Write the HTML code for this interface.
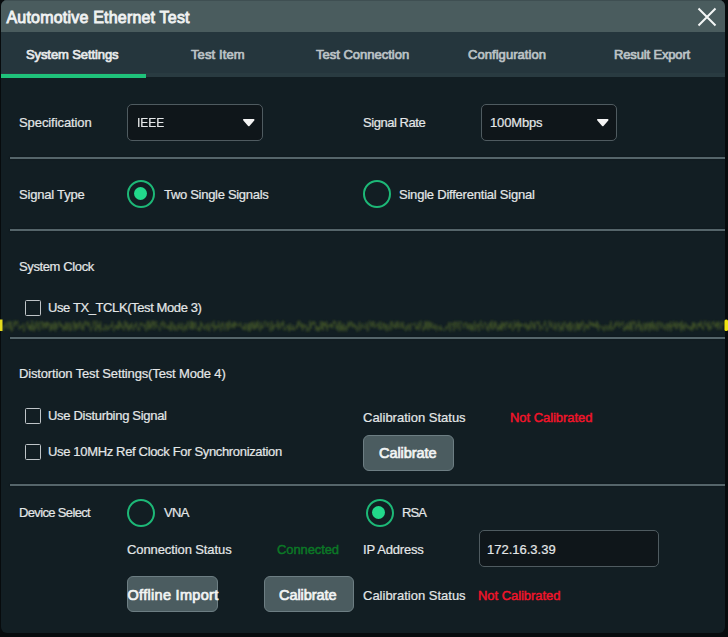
<!DOCTYPE html>
<html><head><meta charset="utf-8">
<style>
*{margin:0;padding:0;box-sizing:border-box}
html,body{width:728px;height:637px;overflow:hidden;background:#070b0d}
body{position:relative;font-family:"Liberation Sans",sans-serif;color:#e4e7e8}
.dlg{position:absolute;left:1px;top:0;width:724px;height:633px;background:#121e23;border-radius:6px;overflow:hidden}
.title{position:absolute;left:0;top:0;width:724px;height:32px;background:#4a5c5e;border-top:1px solid #3f4f52}
.tabs{position:absolute;left:0;top:32px;width:724px;height:45px;background:#25363d}
.t{position:absolute;white-space:nowrap;font-size:13px;line-height:16px;-webkit-text-stroke:0.2px currentColor}
.b{font-weight:bold}
.m{-webkit-text-stroke:0.7px currentColor}
.sep{position:absolute;left:10px;width:715px;height:2px;background:#55656a;box-shadow:0 0 1.5px #0b1316}
.dd{position:absolute;border:1.7px solid #4f5b60;border-radius:5px;background:#0f161a}
.tri{position:absolute;width:0;height:0;border-left:6px solid transparent;border-right:6px solid transparent;border-top:7px solid #f2f2f2}
.radio{position:absolute;width:28px;height:28px;border:2.6px solid #1db877;border-radius:50%}
.radio.on::after{content:"";position:absolute;left:4.9px;top:4.9px;width:13px;height:13px;border-radius:50%;background:#22d88b}
.cb{position:absolute;width:16px;height:16px;border:1.8px solid #bfc5c8;border-radius:1.5px}
.btn{position:absolute;background:#4b5c60;border:1px solid #6d7e83;border-radius:6px}
.red{color:#f2142a;-webkit-text-stroke:0.45px currentColor}
.grn{color:#0b7826;-webkit-text-stroke:0.45px currentColor}
.wave{position:absolute;left:0;top:317px;width:728px;height:17px;overflow:visible}
</style></head><body>
<div class="dlg">
  <div class="title"></div>
  <div class="tabs"></div>
  <div style="position:absolute;left:0;top:73px;width:724px;height:4px;background:#293b41"></div>
  <div style="position:absolute;left:-1px;top:74px;width:146px;height:3.5px;background:#1fc27b"></div>
</div>
<!-- title -->
<div class="t m" style="left:6.5px;top:7.5px;font-size:16px;line-height:20px;letter-spacing:0.2px;color:#f0f2f2;-webkit-text-stroke:0.85px #f0f2f2">Automotive Ethernet Test</div>
<svg style="position:absolute;left:696px;top:6px" width="22" height="22" viewBox="0 0 22 22"><path d="M2.5 2.5L19.5 19.5M19.5 2.5L2.5 19.5" stroke="#f4f6f6" stroke-width="2"/></svg>
<!-- tabs -->
<div class="t m" style="left:26px;top:47px;font-size:13px;letter-spacing:-0.1px;color:#e8eaeb">System Settings</div>
<div class="t m" style="left:191px;top:47px;font-size:13px;letter-spacing:0.1px;color:#bcc3c6">Test Item</div>
<div class="t m" style="left:316px;top:47px;font-size:13px;letter-spacing:0px;color:#bcc3c6">Test Connection</div>
<div class="t m" style="left:468px;top:47px;font-size:13px;letter-spacing:0.05px;color:#bcc3c6">Configuration</div>
<div class="t m" style="left:614px;top:47px;font-size:13px;letter-spacing:-0.15px;color:#bcc3c6">Result Export</div>

<!-- row 1 -->
<div class="t" style="left:19px;top:115px;letter-spacing:-0.08px">Specification</div>
<div class="dd" style="left:127px;top:104px;width:136px;height:37px"></div>
<div class="t" style="left:137px;top:115px;transform:scaleX(0.92);transform-origin:0 0">IEEE</div>
<svg style="position:absolute;left:242px;top:118px" width="14" height="10" viewBox="0 0 14 10"><path d="M2.0 1.8 L11.6 1.8 L6.8 7.3 Z" fill="#f4f4f4" stroke="#f4f4f4" stroke-width="1.8" stroke-linejoin="round"/></svg>
<div class="t" style="left:363px;top:115px;letter-spacing:-0.45px">Signal Rate</div>
<div class="dd" style="left:481px;top:104px;width:136px;height:37px"></div>
<div class="t" style="left:490px;top:115px;letter-spacing:-0.15px">100Mbps</div>
<svg style="position:absolute;left:595.5px;top:118px" width="14" height="10" viewBox="0 0 14 10"><path d="M2.0 1.8 L11.6 1.8 L6.8 7.3 Z" fill="#f4f4f4" stroke="#f4f4f4" stroke-width="1.8" stroke-linejoin="round"/></svg>
<div class="sep" style="top:157px"></div>

<!-- row 2 -->
<div class="t" style="left:19px;top:187px;letter-spacing:-0.2px">Signal Type</div>
<div class="radio on" style="left:127.2px;top:180.4px"></div>
<div class="t" style="left:164px;top:187px;letter-spacing:-0.3px">Two Single Signals</div>
<div class="radio" style="left:362.5px;top:180.2px"></div>
<div class="t" style="left:399px;top:187px;letter-spacing:-0.22px">Single Differential Signal</div>
<div class="sep" style="top:229px"></div>

<!-- row 3 -->
<div class="t" style="left:19px;top:259px;letter-spacing:-0.38px">System Clock</div>
<div class="cb" style="left:25px;top:300px"></div>
<div class="t" style="left:48px;top:300px;letter-spacing:-0.4px">Use TX_TCLK(Test Mode 3)</div>
<svg class="wave" width="728" height="17" viewBox="0 0 728 17">
  <defs><filter id="bl" x="-5%" y="-50%" width="110%" height="200%"><feGaussianBlur stdDeviation="1"/></filter></defs>
  <path d="M2.0 8.5 L2.6 9.7 L3.2 13.7 L3.8 8.6 L4.4 9.1 L5.0 10.0 L5.6 5.5 L6.2 9.1 L6.8 10.4 L7.4 12.2 L8.0 4.5 L8.6 6.8 L9.2 4.5 L9.8 12.4 L10.4 11.1 L11.0 4.0 L11.6 14.3 L12.2 14.1 L12.8 10.7 L13.4 10.3 L14.0 5.2 L14.6 3.7 L15.2 9.3 L15.8 4.2 L16.4 5.6 L17.0 6.2 L17.6 3.8 L18.2 8.6 L18.8 8.3 L19.4 12.8 L20.0 9.2 L20.6 10.5 L21.2 9.0 L21.8 10.8 L22.4 8.5 L23.0 6.6 L23.6 14.5 L24.2 14.5 L24.8 12.7 L25.4 11.3 L26.0 7.0 L26.6 6.0 L27.2 6.7 L27.8 4.3 L28.4 11.9 L29.0 7.9 L29.6 12.8 L30.2 7.8 L30.8 14.0 L31.4 12.8 L32.0 3.5 L32.6 5.8 L33.2 13.5 L33.8 8.7 L34.4 14.3 L35.0 7.9 L35.6 4.3 L36.2 10.4 L36.8 12.1 L37.4 6.5 L38.0 4.5 L38.6 7.2 L39.2 14.1 L39.8 11.8 L40.4 4.8 L41.0 6.2 L41.6 4.6 L42.2 4.2 L42.8 12.3 L43.4 5.5 L44.0 9.7 L44.6 8.4 L45.2 5.6 L45.8 11.6 L46.4 4.9 L47.0 10.6 L47.6 4.8 L48.2 8.1 L48.8 5.8 L49.4 6.5 L50.0 14.2 L50.6 12.3 L51.2 6.8 L51.8 13.2 L52.4 5.8 L53.0 7.8 L53.6 12.9 L54.2 10.6 L54.8 4.6 L55.4 14.4 L56.0 5.8 L56.6 6.3 L57.2 12.0 L57.8 7.1 L58.4 6.8 L59.0 4.3 L59.6 4.5 L60.2 9.9 L60.8 6.2 L61.4 10.1 L62.0 7.6 L62.6 8.5 L63.2 14.1 L63.8 8.8 L64.4 9.8 L65.0 13.0 L65.6 5.5 L66.2 5.2 L66.8 13.5 L67.4 12.5 L68.0 6.2 L68.6 5.6 L69.2 11.6 L69.8 13.8 L70.4 5.7 L71.0 14.0 L71.6 13.2 L72.2 10.1 L72.8 8.1 L73.4 4.6 L74.0 3.9 L74.6 14.1 L75.2 6.1 L75.8 11.3 L76.4 6.3 L77.0 12.6 L77.6 10.1 L78.2 6.7 L78.8 5.4 L79.4 11.4 L80.0 4.3 L80.6 6.0 L81.2 9.7 L81.8 12.9 L82.4 10.3 L83.0 6.6 L83.6 13.6 L84.2 5.7 L84.8 3.7 L85.4 6.5 L86.0 8.4 L86.6 4.2 L87.2 5.4 L87.8 7.6 L88.4 9.8 L89.0 4.9 L89.6 7.5 L90.2 13.3 L90.8 14.3 L91.4 10.7 L92.0 11.1 L92.6 9.9 L93.2 5.0 L93.8 3.9 L94.4 3.7 L95.0 13.5 L95.6 11.2 L96.2 14.1 L96.8 3.7 L97.4 10.5 L98.0 8.8 L98.6 11.5 L99.2 7.0 L99.8 14.5 L100.4 4.3 L101.0 9.5 L101.6 11.6 L102.2 13.4 L102.8 11.6 L103.4 11.2 L104.0 12.2 L104.6 13.6 L105.2 7.4 L105.8 11.0 L106.4 13.4 L107.0 13.1 L107.6 8.1 L108.2 12.2 L108.8 13.0 L109.4 9.8 L110.0 10.4 L110.6 7.7 L111.2 9.9 L111.8 10.2 L112.4 4.4 L113.0 10.5 L113.6 14.4 L114.2 13.2 L114.8 11.5 L115.4 7.8 L116.0 11.6 L116.6 9.9 L117.2 8.3 L117.8 12.7 L118.4 4.4 L119.0 11.8 L119.6 3.8 L120.2 10.1 L120.8 8.8 L121.4 6.0 L122.0 11.2 L122.6 9.0 L123.2 10.3 L123.8 13.6 L124.4 6.3 L125.0 3.6 L125.6 6.8 L126.2 11.0 L126.8 5.7 L127.4 5.4 L128.0 13.5 L128.6 10.8 L129.2 8.4 L129.8 13.3 L130.4 7.1 L131.0 10.8 L131.6 5.7 L132.2 8.2 L132.8 12.4 L133.4 13.6 L134.0 13.2 L134.6 7.7 L135.2 9.9 L135.8 7.0 L136.4 5.0 L137.0 9.0 L137.6 12.7 L138.2 12.8 L138.8 11.3 L139.4 14.0 L140.0 6.5 L140.6 5.4 L141.2 8.5 L141.8 6.5 L142.4 5.9 L143.0 8.1 L143.6 10.4 L144.2 8.9 L144.8 7.0 L145.4 12.7 L146.0 14.3 L146.6 8.5 L147.2 4.3 L147.8 3.8 L148.4 13.1 L149.0 4.0 L149.6 11.3 L150.2 9.8 L150.8 6.9 L151.4 12.2 L152.0 3.7 L152.6 5.0 L153.2 8.5 L153.8 3.8 L154.4 12.6 L155.0 6.1 L155.6 5.0 L156.2 4.0 L156.8 10.4 L157.4 8.4 L158.0 10.4 L158.6 10.7 L159.2 12.4 L159.8 14.0 L160.4 11.0 L161.0 5.7 L161.6 8.7 L162.2 5.5 L162.8 3.6 L163.4 8.7 L164.0 11.4 L164.6 5.5 L165.2 6.5 L165.8 7.3 L166.4 11.2 L167.0 9.2 L167.6 10.3 L168.2 11.8 L168.8 7.8 L169.4 12.2 L170.0 13.5 L170.6 4.5 L171.2 13.8 L171.8 11.4 L172.4 4.9 L173.0 8.5 L173.6 10.4 L174.2 13.5 L174.8 7.6 L175.4 9.8 L176.0 13.2 L176.6 12.3 L177.2 13.9 L177.8 8.6 L178.4 10.7 L179.0 5.8 L179.6 11.4 L180.2 12.5 L180.8 10.6 L181.4 11.4 L182.0 5.8 L182.6 13.4 L183.2 14.3 L183.8 14.3 L184.4 9.4 L185.0 12.2 L185.6 7.0 L186.2 13.5 L186.8 12.9 L187.4 7.3 L188.0 4.4 L188.6 8.3 L189.2 9.6 L189.8 12.0 L190.4 8.9 L191.0 3.8 L191.6 12.4 L192.2 4.2 L192.8 12.3 L193.4 5.4 L194.0 7.2 L194.6 12.2 L195.2 5.0 L195.8 5.1 L196.4 9.2 L197.0 11.5 L197.6 12.7 L198.2 11.1 L198.8 13.9 L199.4 8.9 L200.0 13.9 L200.6 4.4 L201.2 5.9 L201.8 9.3 L202.4 6.7 L203.0 11.5 L203.6 10.5 L204.2 9.3 L204.8 12.8 L205.4 9.7 L206.0 6.9 L206.6 7.7 L207.2 12.8 L207.8 13.4 L208.4 5.8 L209.0 12.9 L209.6 14.2 L210.2 9.3 L210.8 9.8 L211.4 5.7 L212.0 9.4 L212.6 9.0 L213.2 10.2 L213.8 3.8 L214.4 14.2 L215.0 9.2 L215.6 7.9 L216.2 12.3 L216.8 9.7 L217.4 8.9 L218.0 11.1 L218.6 4.2 L219.2 9.4 L219.8 8.1 L220.4 14.0 L221.0 13.7 L221.6 6.5 L222.2 8.7 L222.8 4.9 L223.4 8.3 L224.0 12.5 L224.6 13.4 L225.2 8.7 L225.8 7.0 L226.4 5.6 L227.0 10.3 L227.6 13.7 L228.2 4.9 L228.8 12.1 L229.4 3.8 L230.0 5.6 L230.6 6.0 L231.2 11.1 L231.8 7.0 L232.4 7.4 L233.0 10.3 L233.6 4.7 L234.2 11.5 L234.8 4.9 L235.4 9.1 L236.0 6.3 L236.6 5.7 L237.2 9.3 L237.8 8.3 L238.4 7.6 L239.0 8.0 L239.6 9.3 L240.2 5.3 L240.8 5.7 L241.4 10.4 L242.0 10.5 L242.6 9.3 L243.2 12.9 L243.8 10.2 L244.4 12.9 L245.0 6.1 L245.6 11.6 L246.2 12.4 L246.8 13.4 L247.4 7.0 L248.0 7.0 L248.6 13.7 L249.2 5.9 L249.8 14.5 L250.4 13.3 L251.0 5.0 L251.6 6.1 L252.2 11.5 L252.8 6.4 L253.4 4.6 L254.0 12.7 L254.6 8.1 L255.2 12.2 L255.8 4.9 L256.4 7.9 L257.0 11.0 L257.6 3.7 L258.2 5.7 L258.8 11.0 L259.4 13.5 L260.0 14.2 L260.6 4.8 L261.2 9.1 L261.8 11.8 L262.4 9.0 L263.0 11.0 L263.6 5.6 L264.2 4.3 L264.8 4.7 L265.4 3.9 L266.0 9.6 L266.6 9.2 L267.2 9.8 L267.8 5.1 L268.4 5.5 L269.0 5.7 L269.6 12.7 L270.2 14.4 L270.8 13.7 L271.4 4.5 L272.0 4.2 L272.6 14.0 L273.2 8.6 L273.8 11.9 L274.4 7.1 L275.0 8.6 L275.6 9.2 L276.2 8.2 L276.8 10.1 L277.4 3.6 L278.0 11.2 L278.6 12.8 L279.2 5.5 L279.8 8.5 L280.4 11.6 L281.0 8.0 L281.6 5.6 L282.2 5.3 L282.8 9.1 L283.4 3.7 L284.0 13.3 L284.6 12.3 L285.2 11.3 L285.8 13.0 L286.4 10.4 L287.0 7.9 L287.6 10.1 L288.2 9.0 L288.8 14.3 L289.4 12.4 L290.0 6.3 L290.6 13.5 L291.2 11.7 L291.8 12.1 L292.4 12.5 L293.0 8.0 L293.6 13.4 L294.2 13.2 L294.8 11.1 L295.4 11.9 L296.0 11.9 L296.6 8.0 L297.2 11.4 L297.8 4.3 L298.4 7.3 L299.0 8.7 L299.6 3.6 L300.2 7.4 L300.8 10.5 L301.4 10.4 L302.0 6.1 L302.6 13.9 L303.2 10.8 L303.8 7.2 L304.4 10.8 L305.0 9.8 L305.6 9.4 L306.2 7.8 L306.8 14.5 L307.4 10.6 L308.0 11.2 L308.6 11.9 L309.2 14.3 L309.8 3.8 L310.4 10.3 L311.0 11.6 L311.6 6.3 L312.2 7.9 L312.8 4.1 L313.4 5.6 L314.0 7.6 L314.6 4.6 L315.2 6.3 L315.8 13.5 L316.4 9.6 L317.0 9.1 L317.6 14.1 L318.2 9.7 L318.8 14.4 L319.4 10.5 L320.0 12.4 L320.6 4.3 L321.2 10.1 L321.8 11.9 L322.4 4.0 L323.0 13.7 L323.6 5.3 L324.2 8.7 L324.8 5.4 L325.4 9.0 L326.0 10.2 L326.6 4.1 L327.2 13.9 L327.8 8.1 L328.4 9.3 L329.0 10.1 L329.6 7.5 L330.2 6.6 L330.8 10.7 L331.4 9.7 L332.0 6.6 L332.6 11.4 L333.2 6.8 L333.8 3.7 L334.4 6.2 L335.0 4.0 L335.6 5.2 L336.2 11.8 L336.8 7.8 L337.4 13.4 L338.0 11.7 L338.6 4.1 L339.2 14.4 L339.8 13.9 L340.4 4.3 L341.0 13.5 L341.6 8.2 L342.2 8.8 L342.8 14.2 L343.4 6.2 L344.0 9.3 L344.6 13.8 L345.2 11.5 L345.8 8.7 L346.4 14.3 L347.0 12.5 L347.6 10.1 L348.2 4.8 L348.8 10.4 L349.4 8.5 L350.0 5.7 L350.6 4.1 L351.2 9.3 L351.8 4.9 L352.4 8.4 L353.0 10.8 L353.6 8.5 L354.2 6.4 L354.8 9.9 L355.4 8.1 L356.0 12.1 L356.6 9.3 L357.2 14.5 L357.8 14.0 L358.4 11.6 L359.0 6.1 L359.6 4.8 L360.2 13.3 L360.8 12.1 L361.4 10.4 L362.0 7.5 L362.6 6.5 L363.2 11.0 L363.8 9.7 L364.4 10.0 L365.0 10.5 L365.6 11.8 L366.2 5.6 L366.8 6.2 L367.4 14.3 L368.0 13.6 L368.6 13.2 L369.2 3.9 L369.8 4.2 L370.4 6.5 L371.0 8.2 L371.6 10.4 L372.2 4.6 L372.8 9.5 L373.4 4.3 L374.0 4.5 L374.6 10.9 L375.2 9.6 L375.8 10.4 L376.4 7.6 L377.0 8.8 L377.6 5.8 L378.2 7.3 L378.8 11.7 L379.4 12.7 L380.0 4.3 L380.6 4.8 L381.2 12.4 L381.8 10.4 L382.4 12.0 L383.0 5.8 L383.6 8.2 L384.2 6.3 L384.8 12.4 L385.4 7.6 L386.0 10.7 L386.6 14.4 L387.2 7.1 L387.8 9.5 L388.4 11.7 L389.0 13.6 L389.6 8.2 L390.2 7.6 L390.8 4.6 L391.4 13.1 L392.0 4.4 L392.6 4.4 L393.2 9.7 L393.8 8.8 L394.4 11.0 L395.0 6.8 L395.6 12.0 L396.2 4.3 L396.8 5.8 L397.4 10.8 L398.0 4.4 L398.6 6.8 L399.2 11.5 L399.8 11.1 L400.4 6.6 L401.0 5.1 L401.6 7.4 L402.2 11.5 L402.8 7.5 L403.4 4.8 L404.0 11.3 L404.6 9.8 L405.2 13.6 L405.8 13.8 L406.4 13.5 L407.0 8.3 L407.6 12.3 L408.2 6.9 L408.8 7.0 L409.4 7.9 L410.0 13.8 L410.6 13.3 L411.2 6.2 L411.8 7.5 L412.4 7.5 L413.0 7.5 L413.6 7.9 L414.2 7.8 L414.8 5.6 L415.4 9.7 L416.0 12.3 L416.6 9.4 L417.2 12.7 L417.8 9.7 L418.4 5.4 L419.0 11.8 L419.6 13.2 L420.2 6.6 L420.8 3.7 L421.4 9.2 L422.0 9.5 L422.6 9.7 L423.2 14.1 L423.8 10.7 L424.4 12.3 L425.0 4.2 L425.6 9.5 L426.2 12.2 L426.8 4.4 L427.4 4.4 L428.0 11.6 L428.6 13.4 L429.2 4.4 L429.8 10.5 L430.4 5.1 L431.0 11.7 L431.6 10.6 L432.2 6.2 L432.8 5.9 L433.4 11.9 L434.0 9.2 L434.6 11.9 L435.2 7.8 L435.8 7.2 L436.4 14.2 L437.0 10.9 L437.6 8.9 L438.2 9.4 L438.8 11.4 L439.4 11.3 L440.0 13.6 L440.6 8.0 L441.2 12.6 L441.8 10.8 L442.4 12.9 L443.0 12.4 L443.6 12.7 L444.2 13.3 L444.8 14.0 L445.4 10.5 L446.0 9.3 L446.6 11.3 L447.2 12.3 L447.8 8.1 L448.4 8.1 L449.0 5.1 L449.6 11.7 L450.2 14.4 L450.8 7.6 L451.4 5.3 L452.0 5.7 L452.6 8.2 L453.2 6.7 L453.8 14.2 L454.4 4.2 L455.0 6.9 L455.6 4.8 L456.2 10.6 L456.8 12.0 L457.4 5.5 L458.0 4.2 L458.6 8.5 L459.2 9.9 L459.8 13.5 L460.4 3.9 L461.0 4.7 L461.6 5.5 L462.2 5.9 L462.8 6.1 L463.4 11.4 L464.0 10.0 L464.6 6.0 L465.2 5.5 L465.8 6.6 L466.4 5.4 L467.0 11.8 L467.6 6.9 L468.2 9.5 L468.8 12.5 L469.4 8.8 L470.0 6.4 L470.6 13.3 L471.2 13.6 L471.8 7.3 L472.4 9.5 L473.0 14.0 L473.6 8.8 L474.2 5.9 L474.8 4.0 L475.4 13.9 L476.0 12.3 L476.6 7.7 L477.2 9.3 L477.8 9.2 L478.4 6.5 L479.0 14.4 L479.6 10.7 L480.2 6.1 L480.8 3.6 L481.4 8.7 L482.0 7.6 L482.6 12.3 L483.2 11.3 L483.8 10.2 L484.4 5.2 L485.0 5.2 L485.6 7.0 L486.2 6.4 L486.8 13.1 L487.4 9.2 L488.0 10.5 L488.6 14.4 L489.2 6.4 L489.8 9.4 L490.4 5.2 L491.0 12.0 L491.6 3.5 L492.2 12.5 L492.8 12.8 L493.4 12.5 L494.0 4.4 L494.6 6.5 L495.2 11.4 L495.8 4.6 L496.4 8.8 L497.0 8.7 L497.6 14.0 L498.2 10.0 L498.8 12.9 L499.4 6.8 L500.0 12.2 L500.6 8.1 L501.2 13.6 L501.8 4.5 L502.4 12.6 L503.0 5.8 L503.6 9.5 L504.2 9.3 L504.8 5.2 L505.4 12.7 L506.0 6.9 L506.6 6.9 L507.2 4.3 L507.8 6.9 L508.4 8.6 L509.0 11.4 L509.6 7.5 L510.2 11.1 L510.8 4.7 L511.4 7.8 L512.0 8.6 L512.6 14.1 L513.2 12.6 L513.8 10.7 L514.4 3.6 L515.0 7.6 L515.6 11.3 L516.2 6.1 L516.8 9.7 L517.4 8.5 L518.0 3.6 L518.6 14.4 L519.2 12.3 L519.8 5.8 L520.4 10.3 L521.0 6.7 L521.6 7.6 L522.2 9.4 L522.8 6.8 L523.4 7.2 L524.0 7.8 L524.6 10.8 L525.2 6.3 L525.8 5.7 L526.4 11.5 L527.0 7.1 L527.6 13.9 L528.2 9.7 L528.8 11.5 L529.4 7.1 L530.0 12.6 L530.6 4.5 L531.2 5.0 L531.8 4.5 L532.4 11.0 L533.0 11.3 L533.6 5.5 L534.2 7.9 L534.8 12.7 L535.4 10.0 L536.0 4.5 L536.6 6.0 L537.2 5.2 L537.8 4.9 L538.4 8.0 L539.0 4.3 L539.6 13.6 L540.2 8.2 L540.8 9.1 L541.4 10.6 L542.0 11.9 L542.6 12.5 L543.2 7.7 L543.8 7.1 L544.4 8.0 L545.0 3.7 L545.6 7.9 L546.2 11.2 L546.8 14.3 L547.4 12.2 L548.0 10.8 L548.6 10.2 L549.2 3.7 L549.8 7.1 L550.4 7.3 L551.0 10.7 L551.6 4.7 L552.2 7.7 L552.8 9.1 L553.4 12.2 L554.0 12.6 L554.6 10.2 L555.2 5.2 L555.8 11.9 L556.4 13.4 L557.0 9.5 L557.6 7.4 L558.2 9.0 L558.8 5.1 L559.4 11.3 L560.0 14.4 L560.6 9.2 L561.2 11.4 L561.8 12.7 L562.4 5.7 L563.0 13.9 L563.6 10.4 L564.2 5.7 L564.8 4.4 L565.4 6.2 L566.0 9.8 L566.6 11.2 L567.2 7.1 L567.8 13.7 L568.4 7.5 L569.0 8.6 L569.6 4.9 L570.2 14.2 L570.8 5.0 L571.4 13.4 L572.0 9.5 L572.6 9.7 L573.2 9.7 L573.8 6.4 L574.4 13.5 L575.0 14.4 L575.6 12.5 L576.2 10.1 L576.8 4.8 L577.4 12.6 L578.0 6.7 L578.6 13.4 L579.2 6.1 L579.8 9.8 L580.4 12.6 L581.0 5.5 L581.6 9.5 L582.2 4.3 L582.8 3.9 L583.4 5.5 L584.0 14.4 L584.6 13.8 L585.2 10.7 L585.8 6.9 L586.4 10.9 L587.0 11.6 L587.6 7.7 L588.2 10.0 L588.8 12.3 L589.4 3.7 L590.0 5.7 L590.6 8.6 L591.2 5.1 L591.8 7.8 L592.4 9.8 L593.0 5.4 L593.6 9.2 L594.2 6.4 L594.8 9.7 L595.4 7.2 L596.0 10.6 L596.6 3.9 L597.2 10.9 L597.8 5.1 L598.4 14.1 L599.0 10.1 L599.6 8.7 L600.2 8.0 L600.8 10.4 L601.4 11.1 L602.0 11.8 L602.6 11.8 L603.2 8.8 L603.8 14.4 L604.4 12.7 L605.0 12.9 L605.6 8.0 L606.2 8.3 L606.8 9.7 L607.4 13.5 L608.0 9.3 L608.6 9.3 L609.2 8.3 L609.8 13.4 L610.4 7.0 L611.0 4.1 L611.6 11.5 L612.2 13.4 L612.8 11.6 L613.4 10.1 L614.0 11.8 L614.6 6.9 L615.2 10.0 L615.8 4.3 L616.4 4.9 L617.0 8.4 L617.6 9.0 L618.2 7.9 L618.8 4.1 L619.4 11.1 L620.0 9.3 L620.6 6.1 L621.2 6.9 L621.8 7.9 L622.4 6.1 L623.0 4.3 L623.6 13.5 L624.2 14.1 L624.8 10.8 L625.4 13.0 L626.0 8.1 L626.6 12.4 L627.2 5.9 L627.8 11.7 L628.4 9.7 L629.0 13.4 L629.6 4.6 L630.2 12.2 L630.8 4.9 L631.4 9.4 L632.0 14.0 L632.6 3.5 L633.2 6.2 L633.8 6.8 L634.4 7.1 L635.0 4.2 L635.6 13.3 L636.2 12.5 L636.8 7.9 L637.4 7.4 L638.0 9.9 L638.6 4.0 L639.2 3.8 L639.8 13.4 L640.4 6.9 L641.0 9.0 L641.6 13.8 L642.2 14.3 L642.8 8.7 L643.4 5.8 L644.0 6.7 L644.6 13.6 L645.2 13.4 L645.8 5.7 L646.4 12.7 L647.0 7.4 L647.6 8.7 L648.2 5.4 L648.8 13.2 L649.4 14.4 L650.0 5.7 L650.6 10.5 L651.2 5.6 L651.8 13.2 L652.4 4.1 L653.0 4.7 L653.6 11.5 L654.2 6.9 L654.8 13.4 L655.4 13.1 L656.0 11.3 L656.6 5.0 L657.2 11.2 L657.8 13.8 L658.4 8.4 L659.0 4.4 L659.6 6.0 L660.2 6.9 L660.8 11.3 L661.4 5.7 L662.0 5.5 L662.6 6.1 L663.2 10.8 L663.8 12.2 L664.4 7.6 L665.0 10.8 L665.6 13.2 L666.2 10.0 L666.8 6.0 L667.4 6.8 L668.0 13.7 L668.6 10.8 L669.2 6.5 L669.8 10.5 L670.4 4.5 L671.0 14.3 L671.6 8.3 L672.2 9.3 L672.8 9.3 L673.4 4.0 L674.0 10.1 L674.6 6.6 L675.2 6.3 L675.8 12.3 L676.4 4.5 L677.0 6.6 L677.6 11.8 L678.2 6.2 L678.8 6.6 L679.4 9.5 L680.0 5.5 L680.6 13.4 L681.2 14.4 L681.8 3.9 L682.4 8.6 L683.0 11.8 L683.6 7.7 L684.2 13.7 L684.8 9.0 L685.4 5.5 L686.0 9.6 L686.6 10.6 L687.2 7.5 L687.8 10.7 L688.4 12.1 L689.0 9.2 L689.6 9.1 L690.2 12.8 L690.8 11.0 L691.4 9.2 L692.0 14.0 L692.6 5.4 L693.2 12.1 L693.8 5.3 L694.4 10.2 L695.0 6.1 L695.6 8.3 L696.2 12.0 L696.8 12.2 L697.4 12.2 L698.0 6.1 L698.6 8.9 L699.2 5.9 L699.8 9.9 L700.4 9.0 L701.0 3.9 L701.6 10.1 L702.2 11.4 L702.8 9.8 L703.4 13.1 L704.0 5.5 L704.6 5.2 L705.2 3.7 L705.8 9.0 L706.4 8.3 L707.0 8.4 L707.6 6.4 L708.2 12.3 L708.8 4.3 L709.4 13.5 L710.0 9.8 L710.6 9.5 L711.2 12.2 L711.8 6.1 L712.4 5.1 L713.0 6.9 L713.6 4.0 L714.2 7.0 L714.8 10.3 L715.4 9.3 L716.0 6.4 L716.6 10.0 L717.2 4.5 L717.8 12.5 L718.4 5.4 L719.0 6.3 L719.6 5.3 L720.2 11.1 L720.8 12.6 L721.4 12.2 L722.0 4.2 L722.6 8.0 L723.2 7.5 L723.8 5.9" stroke="#3f5128" stroke-width="0.9" fill="none" filter="url(#bl)"/>
  <rect x="0" y="2.5" width="2.5" height="11.5" fill="#e6dc1c"/>
  <rect x="724.5" y="2.5" width="3.5" height="11.5" rx="1.5" fill="#f2e410"/>
</svg>
<div class="sep" style="top:337px"></div>

<!-- row 4 -->
<div class="t" style="left:19px;top:366px;letter-spacing:-0.15px">Distortion Test Settings(Test Mode 4)</div>
<div class="cb" style="left:25px;top:408px"></div>
<div class="t" style="left:48px;top:408px;letter-spacing:-0.3px">Use Disturbing Signal</div>
<div class="cb" style="left:25px;top:444px"></div>
<div class="t" style="left:48px;top:444px;letter-spacing:-0.34px">Use 10MHz Ref Clock For Synchronization</div>
<div class="t" style="left:363px;top:410px">Calibration Status</div>
<div class="t red" style="left:510px;top:410px;letter-spacing:-0.05px">Not Calibrated</div>
<div class="btn" style="left:363px;top:435px;width:91px;height:36px"></div>
<div class="t m" style="left:379px;top:445px;font-size:14.5px;letter-spacing:-0.05px;color:#f2f4f4">Calibrate</div>
<div class="sep" style="top:484px"></div>

<!-- row 5 -->
<div class="t" style="left:19px;top:505px;letter-spacing:-0.65px">Device Select</div>
<div class="radio" style="left:127.2px;top:498.5px"></div>
<div class="t" style="left:164px;top:505px;letter-spacing:-0.6px">VNA</div>
<div class="radio on" style="left:365.6px;top:498.7px"></div>
<div class="t" style="left:402px;top:505px;letter-spacing:-0.9px">RSA</div>
<div class="t" style="left:127px;top:542px;letter-spacing:-0.1px">Connection Status</div>
<div class="t grn" style="left:277px;top:542px;letter-spacing:-0.1px">Connected</div>
<div class="t" style="left:363px;top:542px;letter-spacing:-0.2px">IP Address</div>
<div class="dd" style="left:479px;top:530px;width:180px;height:37px"></div>
<div class="t" style="left:487px;top:542px">172.16.3.39</div>
<div class="btn" style="left:127px;top:576px;width:91px;height:36px"></div>
<div class="t m" style="left:127.5px;top:587px;font-size:14.5px;letter-spacing:0.3px;color:#f2f4f4">Offline Import</div>
<div class="btn" style="left:264px;top:576px;width:90px;height:36px"></div>
<div class="t m" style="left:279px;top:587px;font-size:14.5px;letter-spacing:-0.05px;color:#f2f4f4">Calibrate</div>
<div class="t" style="left:363px;top:588px">Calibration Status</div>
<div class="t red" style="left:478px;top:588px;letter-spacing:-0.05px">Not Calibrated</div>


</body></html>
